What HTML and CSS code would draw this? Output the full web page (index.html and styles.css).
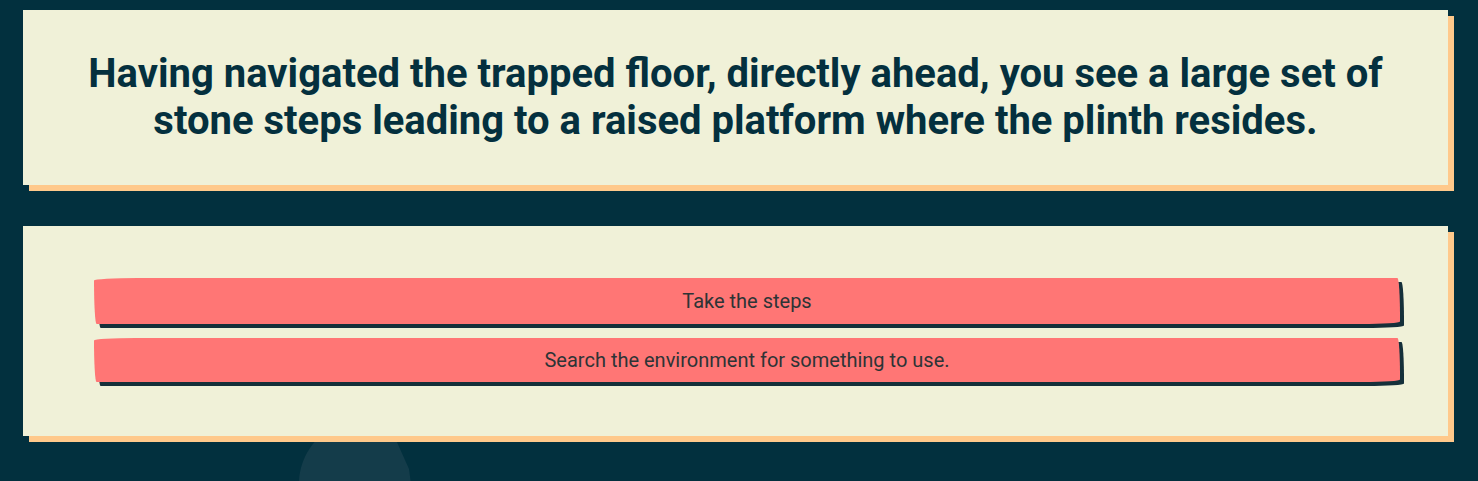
FILE: index.html
```html
<!DOCTYPE html>
<html>
<head>
<meta charset="utf-8">
<link rel="stylesheet" href="styles.css">
</head>
<body>
<svg class="blob" width="130" height="60" viewBox="0 0 130 60" aria-hidden="true">
  <path d="M5 60 C5 35 20 12 40 4 L40 0 L92 0 L98 7 L115 45 L117 60 Z" fill="#143c4a"/>
</svg>
<main class="page">
  <section class="card story">
    <h1 class="story-text">Having navigated the trapped floor, directly ahead, you see a large set of stone steps leading to a raised platform where the plinth resides.</h1>
  </section>
  <section class="card choices">
    <button class="choice">Take the steps</button>
    <button class="choice">Search the environment for something to use.</button>
  </section>
</main>
</body>
</html>
```
FILE: styles.css
```css
html, body {
  margin: 0;
  padding: 0;
}
body {
  background: #02303e;
  font-family: Roboto, "Liberation Sans", sans-serif;
  height: 481px;
  overflow: hidden;
  position: relative;
}
.blob {
  position: absolute;
  left: 294px;
  top: 424px;
  display: block;
}
.page {
  position: relative;
  display: flex;
  flex-direction: column;
  gap: 41px;
  padding: 10px 30px 0 23px;
}
.card {
  background: #f0f1d8;
  box-shadow: 6px 6px 0 #ffc98b;
}
.story {
  height: 175px;
  box-sizing: border-box;
  padding: 40px 40px 0;
}
.story-text {
  margin: 0;
  text-align: center;
  font-weight: 700;
  font-size: 40px;
  line-height: 47px;
  color: #04303e;
}
.choices {
  height: 210px;
  box-sizing: border-box;
  padding: 52px 48px 0 71px;
  display: flex;
  flex-direction: column;
  gap: 14px;
}
.choice {
  display: block;
  width: 100%;
  height: 46px;
  border: none;
  background: #ff7675;
  color: #2d3436;
  font-family: Roboto, "Liberation Sans", sans-serif;
  font-size: 20px;
  box-shadow: 4px 4px 0 #15303a;
  border-radius: 255px 15px 225px 15px / 15px 225px 15px 255px;
  cursor: pointer;
}
.choice + .choice {
  height: 44px;
}
```
